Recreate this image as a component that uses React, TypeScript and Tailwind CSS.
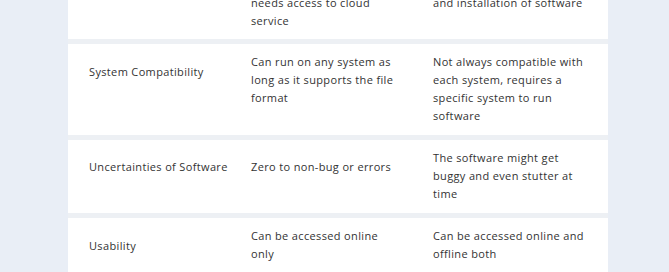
import React from "react";

interface Row {
  feature: string;
  cloud: string[];
  desktop: string[];
  featurePad: string;
  cloudPad: string;
  bottomPad: string;
}

const rows: Row[] = [
  {
    feature: "Installation",
    cloud: ["Requires no installation, just", "needs access to cloud", "service"],
    desktop: ["Requires downloading", "and installation of software"],
    featurePad: "pt-[9px]",
    cloudPad: "pt-[9px]",
    bottomPad: "pb-[9px]",
  },
  {
    feature: "System Compatibility",
    cloud: ["Can run on any system as", "long as it supports the file", "format"],
    desktop: [
      "Not always compatible with",
      "each system, requires a",
      "specific system to run",
      "software",
    ],
    featurePad: "pt-[19px]",
    cloudPad: "pt-[9px]",
    bottomPad: "pb-[10px]",
  },
  {
    feature: "Uncertainties of Software",
    cloud: ["Zero to non-bug or errors"],
    desktop: ["The software might get", "buggy and even stutter at", "time"],
    featurePad: "pt-[18px]",
    cloudPad: "pt-[18px]",
    bottomPad: "pb-[10px]",
  },
  {
    feature: "Usability",
    cloud: ["Can be accessed online", "only"],
    desktop: ["Can be accessed online and", "offline both"],
    featurePad: "pt-[19px]",
    cloudPad: "pt-[9px]",
    bottomPad: "pb-[10px]",
  },
];

const Lines = ({ lines }: { lines: string[] }) => (
  <>
    {lines.map((l, i) => (
      <span key={i} className="block whitespace-nowrap">
        {l}
      </span>
    ))}
  </>
);

const ComparisonRow = ({ row }: { row: Row }) => (
  <div className={`grid grid-cols-[162px_182px_1fr] bg-white pl-[21px] pr-[21px] ${row.bottomPad}`}>
    <div className={row.featurePad}>{row.feature}</div>
    <div className={row.cloudPad}>
      <Lines lines={row.cloud} />
    </div>
    <div className="pt-[9px]">
      <Lines lines={row.desktop} />
    </div>
  </div>
);

export default function App() {
  return (
    <div className="h-[272px] w-[669px] overflow-hidden bg-[#e9eef6]">
      <div className="mx-[68px] mt-[-33px] w-[540px]">
        <div
          className="flex flex-col gap-[5px] bg-[#edf0f4] text-[11px] font-medium leading-[18px] tracking-[0.35px] text-[#333333]"
          style={{ fontFamily: '"Open Sans", "Liberation Sans", sans-serif' }}
        >
          {rows.map((row) => (
            <ComparisonRow key={row.feature} row={row} />
          ))}
        </div>
      </div>
    </div>
  );
}
